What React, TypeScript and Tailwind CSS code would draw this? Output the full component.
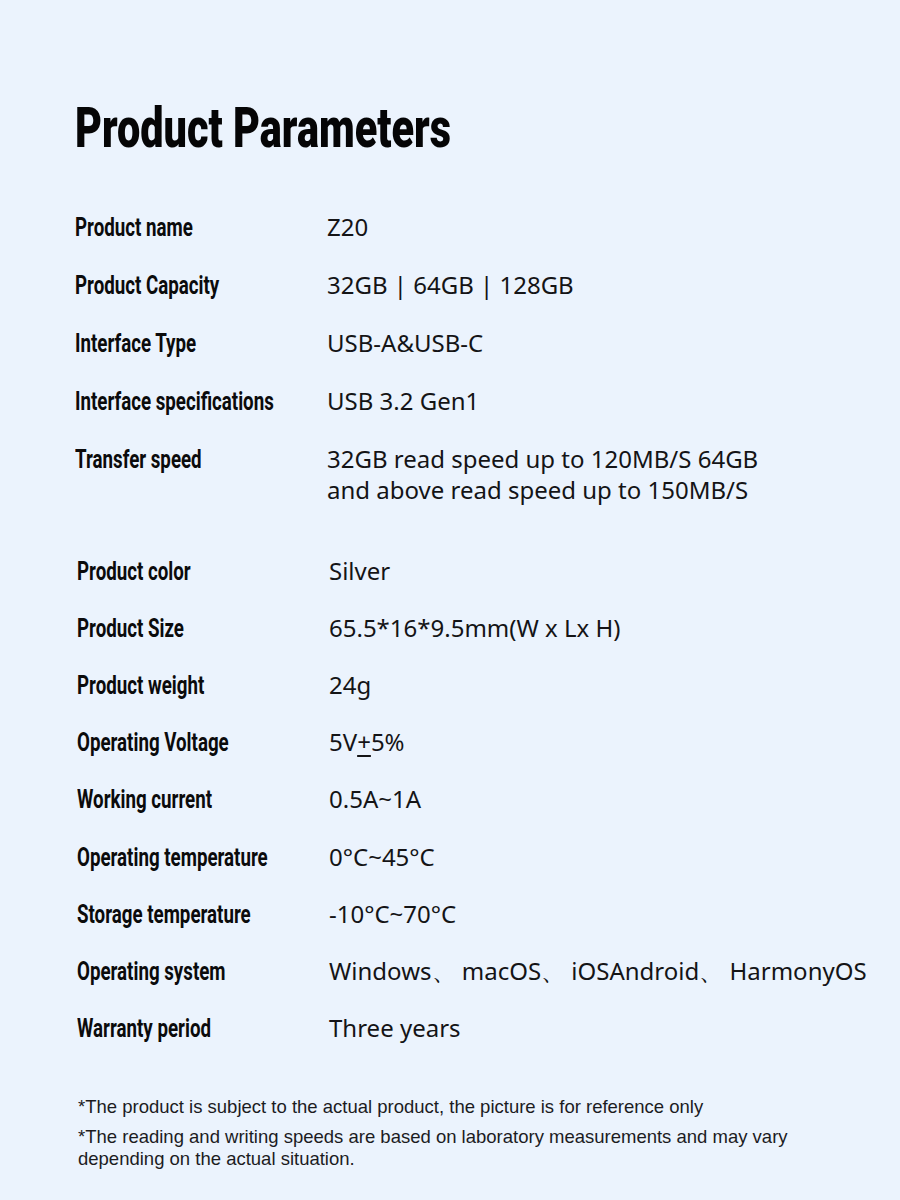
const label =
  "inline-block origin-left scale-x-[0.72] whitespace-nowrap font-['Roboto',sans-serif] font-bold text-[26px] leading-[32px] text-[#0b0b0c]";
const value = "font-['Noto_Sans',sans-serif] text-[24px] text-[#141416]";

type Row = { name: string; value: React.ReactNode; extra?: boolean };

const groupA: Row[] = [
  { name: "Product name", value: "Z20" },
  { name: "Product Capacity", value: "32GB | 64GB | 128GB" },
  { name: "Interface Type", value: "USB-A&USB-C" },
  { name: "Interface specifications", value: "USB 3.2 Gen1" },
  {
    name: "Transfer speed",
    value: (
      <>
        32GB read speed up to 120MB/S 64GB
        <br />
        and above read speed up to 150MB/S
      </>
    ),
    extra: true,
  },
];

const groupB: Row[] = [
  { name: "Product color", value: "Silver" },
  { name: "Product Size", value: "65.5*16*9.5mm(W x Lx H)" },
  { name: "Product weight", value: "24g" },
  {
    name: "Operating Voltage",
    value: (
      <>
        5V<span className="underline underline-offset-4">+</span>5%
      </>
    ),
  },
  { name: "Working current", value: "0.5A~1A" },
  { name: "Operating temperature", value: "0°C~45°C" },
  { name: "Storage temperature", value: "-10°C~70°C" },
  { name: "Operating system", value: "Windows、 macOS、 iOSAndroid、 HarmonyOS" },
  { name: "Warranty period", value: "Three years" },
];

function ParamRow({ row, tight }: { row: Row; tight?: boolean }) {
  return (
    <div
      className={`grid grid-cols-[252px_1fr] items-start ${tight ? "py-[12.6px]" : "py-[13px]"} ${
        row.extra ? "pb-[37px]" : ""
      }`}
    >
      <div className="flex h-[32px] items-center">
        <span className={label}>{row.name}</span>
      </div>
      <div className={`${value} leading-[31px] whitespace-nowrap`}>{row.value}</div>
    </div>
  );
}

export default function App() {
  return (
    <main className="min-h-[1200px] w-[900px] bg-[#ebf3fd] pl-[75px] pt-[100px]">
      <h1 className="h-[56px] leading-[56px]">
        <span className="inline-block origin-left scale-x-[0.74] whitespace-nowrap font-['Roboto',sans-serif] text-[56px] font-black text-[#050506]">
          Product Parameters
        </span>
      </h1>

      <section className="mt-[42px]">
        {groupA.map((r) => (
          <ParamRow key={r.name} row={r} />
        ))}
        <div className="pl-[2px]">
          {groupB.map((r) => (
            <ParamRow key={r.name} row={r} tight />
          ))}
        </div>
      </section>

      <footer className="mt-[39px] pl-[3px] font-['Liberation_Sans',sans-serif] text-[18.5px] leading-[22px] text-[#1c1c1f]">
        <p>*The product is subject to the actual product, the picture is for reference only</p>
        <p className="mt-2">
          *The reading and writing speeds are based on laboratory measurements and may vary
          <br />
          depending on the actual situation.
        </p>
      </footer>
    </main>
  );
}
